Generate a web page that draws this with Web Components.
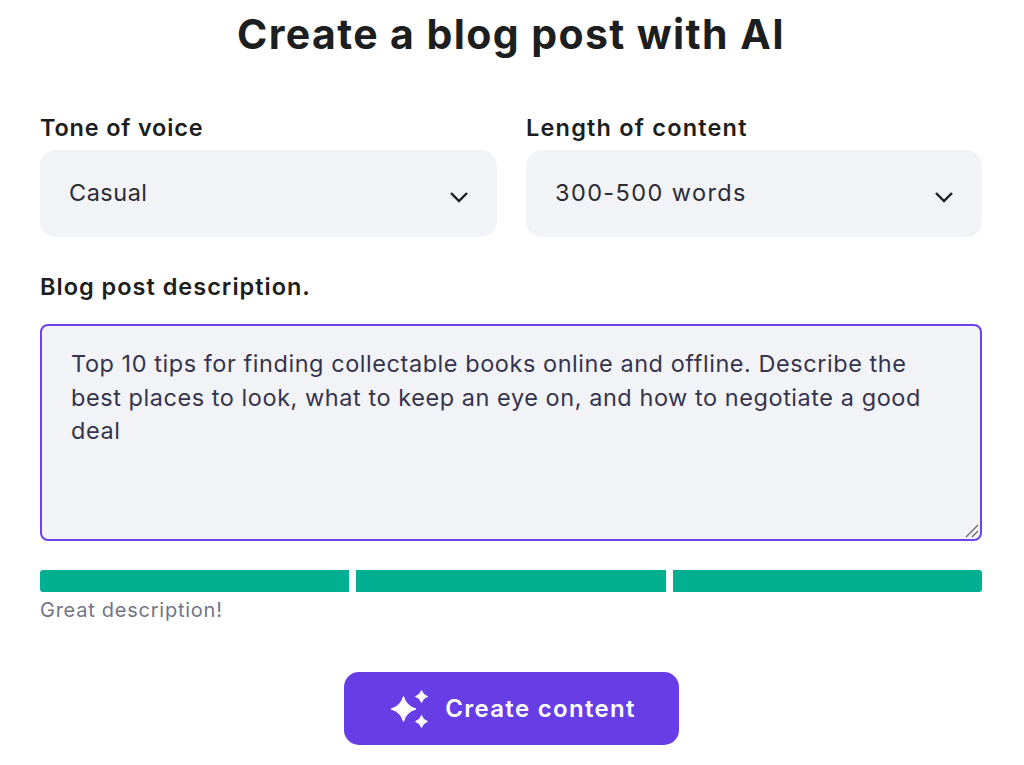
<!DOCTYPE html>
<html lang="en">
<head>
<meta charset="utf-8">
<title>Create a blog post with AI</title>
<style>
  html, body { margin: 0; background: #fff; }
  body { font-family: Inter, "Noto Sans", sans-serif; color: #1d1e20; }
</style>
</head>
<body>
<blog-form></blog-form>
<script>
class SelectField extends HTMLElement {
  constructor() {
    super();
    this.root = this.attachShadow({ mode: "open" });
    this.root.innerHTML = `
      <style>
        :host { display: block; }
        .label { font-size: 23.5px; font-weight: 600; letter-spacing: var(--label-spacing, 0.8px); line-height: 30px; height: 30px; margin-bottom: 7px; color: #1d1e20; }
        .box {
          height: 87px;
          border-radius: 16px;
          background: #f2f3f6;
          display: flex;
          align-items: center;
          justify-content: space-between;
          padding: 0 28px 0 29px;
          font-size: 23.5px;
          letter-spacing: var(--value-spacing, 0.5px);
          color: #2b2c33;
        }
        span { margin-bottom: 2px; }
        svg { display: block; margin-top: 6px; }
      </style>
      <div class="label">${this.getAttribute("label")}</div>
      <div class="box">
        <span><slot></slot></span>
        <svg width="20" height="12" viewBox="0 0 20 12" fill="none"><path d="M2 2l8 8 8-8" stroke="#1d1e20" stroke-width="2.4"/></svg>
      </div>`;
  }
}

class StrengthBar extends HTMLElement {
  constructor() {
    super();
    this.root = this.attachShadow({ mode: "open" });
    this.root.innerHTML = `
      <style>
        :host { display: block; }
        .bars { display: grid; grid-template-columns: repeat(3, 1fr); gap: 7px; }
        .bars div { height: 22px; background: #00b090; }
        .bars div:first-child { border-radius: 3px 0 0 3px; }
        .bars div:last-child { border-radius: 0 3px 3px 0; }
        .hint { font-size: 20px; letter-spacing: 0.75px; line-height: 26px; margin-top: 5px; color: #727586; }
      </style>
      <div class="bars"><div></div><div></div><div></div></div>
      <div class="hint"><slot></slot></div>`;
  }
}

class SparkButton extends HTMLElement {
  constructor() {
    super();
    this.root = this.attachShadow({ mode: "open" });
    this.root.innerHTML = `
      <style>
        :host { display: flex; justify-content: center; }
        .btn {
          box-sizing: border-box;
          width: 335px;
          height: 73px;
          border-radius: 15px;
          background: #673de6;
          color: #fff;
          display: flex;
          align-items: center;
          justify-content: center;
          gap: 15px;
          padding-left: 4px;
          font-size: 24px;
          font-weight: 600;
          letter-spacing: 1.3px;
        }
        svg { display: block; }
      </style>
      <div class="btn">
        <svg width="40" height="40" viewBox="0 0 40 40" fill="#fff" stroke="#fff" stroke-width="1" stroke-linejoin="round">
          <path d="M13.500 7.500Q16.300 17.200 26 20 16.300 22.800 13.500 32.500 10.700 22.800 1 20 10.700 17.200 13.500 7.500z"/>
          <path d="M31.500 1.500Q32.900 6.100 37.500 7.500 32.900 8.900 31.500 13.500 30.100 8.900 25.500 7.500 30.100 6.100 31.500 1.500z"/>
          <path d="M31.500 26.500Q32.900 31.100 37.500 32.500 32.900 33.900 31.500 38.500 30.100 33.900 25.500 32.500 30.100 31.100 31.500 26.500z"/>
        </svg>
        <span><slot></slot></span>
      </div>`;
  }
}

class BlogForm extends HTMLElement {
  constructor() {
    super();
    this.root = this.attachShadow({ mode: "open" });
    this.root.innerHTML = `
      <style>
        :host { display: block; padding: 9px 42px 0 40px; }
        h1 { margin: 0 0 54px; font-size: 41px; font-weight: 700; letter-spacing: 1.4px; line-height: 50px; text-align: center; color: #1d1e20; }
        .row { display: grid; grid-template-columns: 457px 456px; gap: 29px; }
        .desc-label { font-size: 23.5px; font-weight: 600; letter-spacing: 1px; line-height: 30px; margin: 35px 0 22px; color: #1d1e20; }
        .area {
          position: relative;
          box-sizing: border-box;
          height: 217px;
          border: 2px solid #6b43e6;
          border-radius: 8px;
          background: #f2f3f6;
          padding: 21px 29px;
          font-size: 23.5px;
          letter-spacing: 0.55px;
          line-height: 33.500px;
          color: #36344d;
        }
        .grip { position: absolute; right: 1px; bottom: 1px; }
        strength-bar { margin-top: 29px; }
        spark-button { margin-top: 49px; }
      </style>
      <h1>Create a blog post with AI</h1>
      <div class="row">
        <select-field label="Tone of voice">Casual</select-field>
        <select-field label="Length of content" style="--label-spacing: 1.2px; --value-spacing: 1.4px">300-500 words</select-field>
      </div>
      <div class="desc-label">Blog post description.</div>
      <div class="area">Top 10 tips for finding collectable books online and offline. Describe the best places to look, what to keep an eye on, and how to negotiate a good deal
        <svg class="grip" width="14" height="14" viewBox="0 0 14 14" fill="none" stroke="#666" stroke-width="1.300"><path d="M1 13L13 1M7 13l6-6"/></svg>
      </div>
      <strength-bar>Great description!</strength-bar>
      <spark-button>Create content</spark-button>`;
  }
}

customElements.define("select-field", SelectField);
customElements.define("strength-bar", StrengthBar);
customElements.define("spark-button", SparkButton);
customElements.define("blog-form", BlogForm);
</script>
</body>
</html>
